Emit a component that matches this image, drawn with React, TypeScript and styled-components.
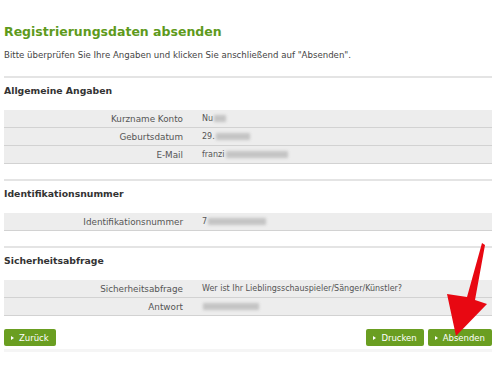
import React from 'react';
import styled, { createGlobalStyle } from 'styled-components';

const GlobalStyle = createGlobalStyle`
  html, body {
    margin: 0;
    padding: 0;
    background: #ffffff;
  }
  body {
    font-family: "DejaVu Sans", Verdana, sans-serif;
    color: #444;
  }
`;

const Page = styled.div`
  position: relative;
  width: 498px;
  height: 373px;
  padding: 22px 6px 0 4px;
  box-sizing: border-box;
  overflow: hidden;
`;

const Title = styled.h1`
  margin: 0;
  font-size: 12.5px;
  line-height: 20px;
  font-weight: bold;
  color: #5e9a1c;
`;

const Intro = styled.p`
  margin: 6px 0 0 0;
  font-size: 8.6px;
  line-height: 14px;
  color: #444;
`;

const Section = styled.section`
  margin-top: 14px;
  border-top: 2px solid #e4e4e4;
  padding-top: 5px;
  & + & {
    margin-top: 15px;
  }
`;

const SectionTitle = styled.h2`
  margin: 0 0 11px 0;
  font-size: 9.3px;
  line-height: 16px;
  font-weight: bold;
  color: #333;
`;

const Table = styled.div`
  display: flex;
  flex-direction: column;
  background: #ededed;
`;

const Row = styled.div`
  display: grid;
  grid-template-columns: 179px 1fr;
  column-gap: 19px;
  align-items: center;
  height: 17px;
  border-bottom: 1px solid #d2d2d2;
  font-size: 8.8px;
`;

const Label = styled.div`
  text-align: right;
  color: #555;
`;

const Value = styled.div`
  display: flex;
  align-items: center;
  color: #555;
  font-size: 8px;
`;

const Blur = styled.span<{ $w: number }>`
  display: inline-block;
  width: ${p => p.$w}px;
  height: 7px;
  background: #c4c4c4;
  filter: blur(1.6px);
  margin-left: 1px;
`;

const Actions = styled.div`
  display: flex;
  align-items: center;
  gap: 4px;
  margin-top: 13px;
  padding-bottom: 3px;
  border-bottom: 3px solid #f5f5f5;
`;

const Spacer = styled.div`
  flex: 1;
`;

const Button = styled.button`
  display: inline-flex;
  align-items: center;
  gap: 5px;
  height: 17px;
  padding: 0 7px;
  border: none;
  border-radius: 2px;
  background: #6a9e21;
  color: #ffffff;
  font-family: "DejaVu Sans", Verdana, sans-serif;
  font-size: 8.5px;
  cursor: pointer;
  &::before {
    content: '';
    border-left: 3px solid #ffffff;
    border-top: 2.5px solid transparent;
    border-bottom: 2.5px solid transparent;
  }
`;

const Arrow = styled.svg`
  position: absolute;
  left: 440px;
  top: 238px;
  width: 50px;
  height: 102px;
  pointer-events: none;
`;

const App: React.FC = () => {
  return (
    <>
      <GlobalStyle />
      <Page>
        <Title>Registrierungsdaten absenden</Title>
        <Intro>Bitte überprüfen Sie Ihre Angaben und klicken Sie anschließend auf "Absenden".</Intro>

        <Section>
          <SectionTitle>Allgemeine Angaben</SectionTitle>
          <Table>
            <Row>
              <Label>Kurzname Konto</Label>
              <Value>Nu<Blur $w={12} /></Value>
            </Row>
            <Row>
              <Label>Geburtsdatum</Label>
              <Value>29.<Blur $w={34} /></Value>
            </Row>
            <Row>
              <Label>E-Mail</Label>
              <Value>franzi<Blur $w={62} /></Value>
            </Row>
          </Table>
        </Section>

        <Section>
          <SectionTitle>Identifikationsnummer</SectionTitle>
          <Table>
            <Row>
              <Label>Identifikationsnummer</Label>
              <Value>7<Blur $w={58} /></Value>
            </Row>
          </Table>
        </Section>

        <Section>
          <SectionTitle>Sicherheitsabfrage</SectionTitle>
          <Table>
            <Row>
              <Label>Sicherheitsabfrage</Label>
              <Value>Wer ist Ihr Lieblingsschauspieler/Sänger/Künstler?</Value>
            </Row>
            <Row>
              <Label>Antwort</Label>
              <Value><Blur $w={56} /></Value>
            </Row>
          </Table>
        </Section>

        <Actions>
          <Button>Zurück</Button>
          <Spacer />
          <Button>Drucken</Button>
          <Button>Absenden</Button>
        </Actions>

        <Arrow viewBox="0 0 50 102">
          <polygon
            points="42,5 45,7 35,62 47,66 16,98 7,56 27,59"
            fill="#e80812"
          />
        </Arrow>
      </Page>
    </>
  );
};

export default App;
